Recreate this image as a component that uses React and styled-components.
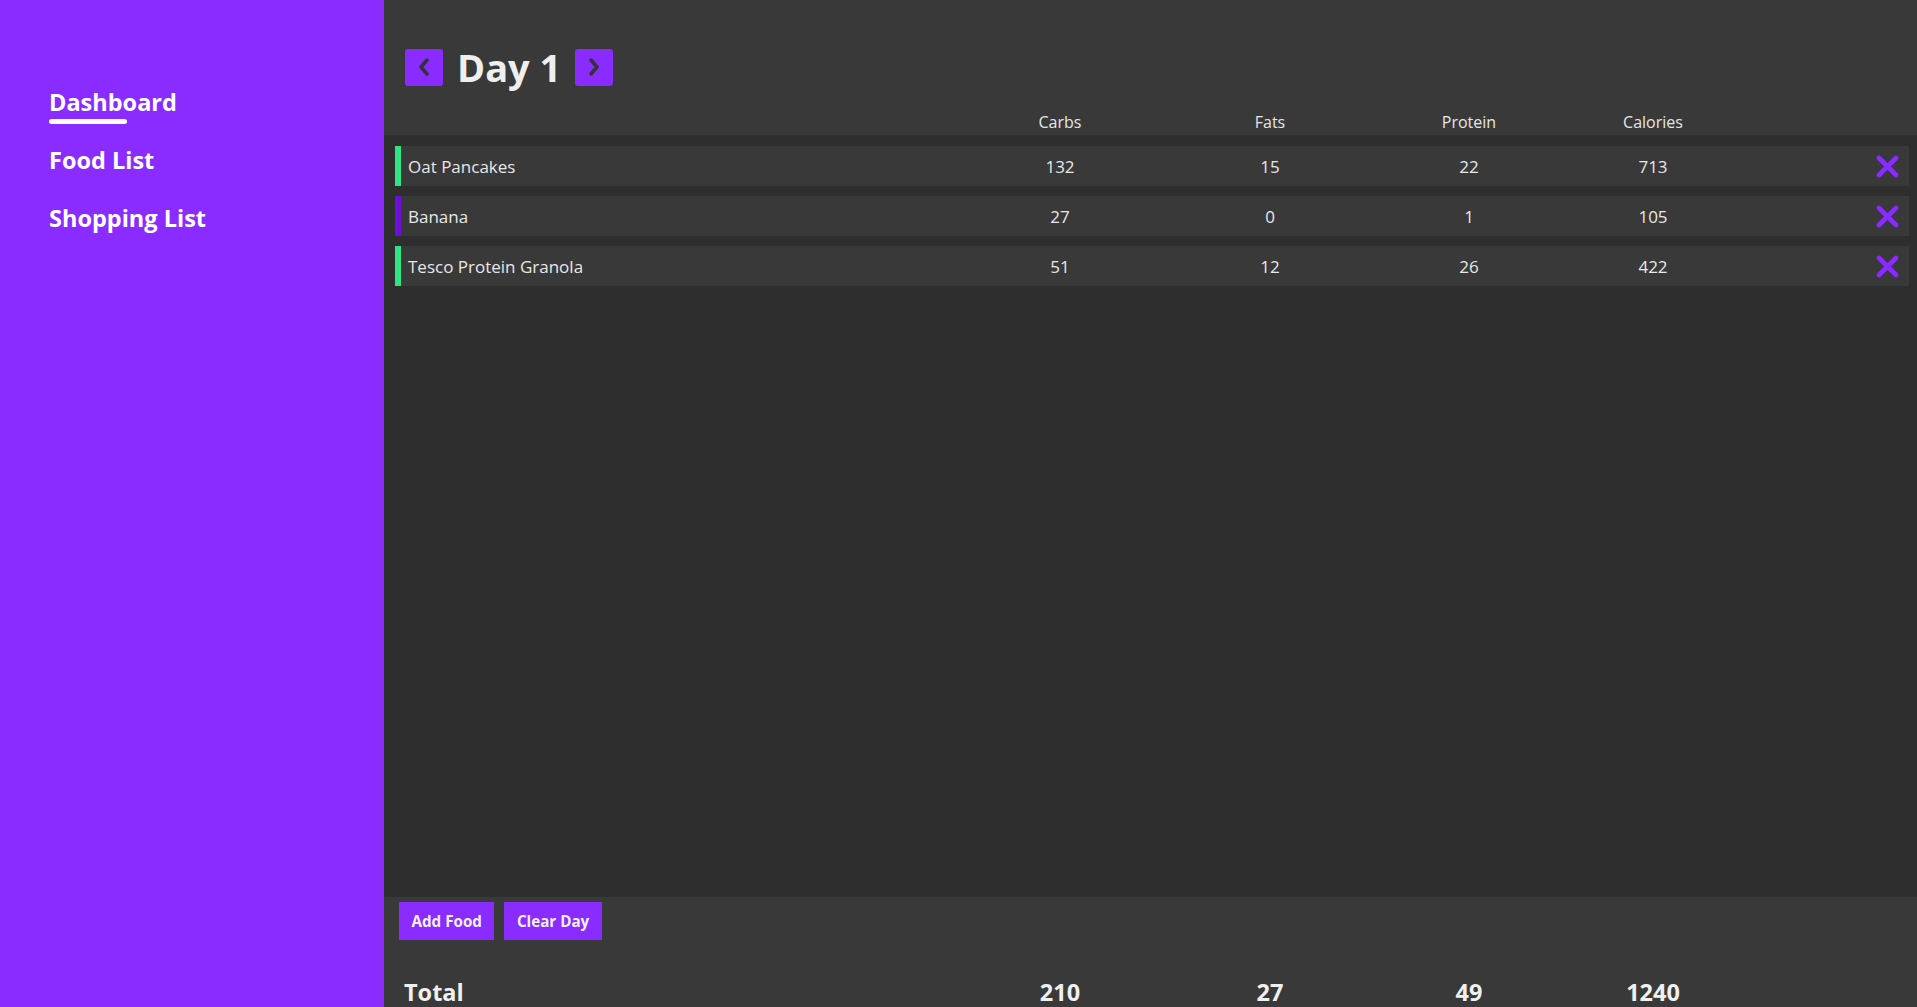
import React from "react";
import styled, { createGlobalStyle } from "styled-components";

const foods = [
  { name: "Oat Pancakes", carbs: 132, fats: 15, protein: 22, calories: 713, tag: "green" },
  { name: "Banana", carbs: 27, fats: 0, protein: 1, calories: 105, tag: "purple" },
  { name: "Tesco Protein Granola", carbs: 51, fats: 12, protein: 26, calories: 422, tag: "green" },
];

const tagColors = {
  green: "#2fe583",
  purple: "#6c0fd8",
};

const Global = createGlobalStyle`
  * { box-sizing: border-box; }
  body {
    margin: 0;
    font-family: "Open Sans", "Noto Sans", sans-serif;
    background: #2e2e2e;
    color: #ececec;
  }
`;

const Chevron = ({ dir }) => (
  <svg width="14" height="18" viewBox="0 0 14 18">
    <polyline
      points={dir === "left" ? "10,2 4,9 10,16" : "4,2 10,9 4,16"}
      fill="none"
      stroke="#333333"
      strokeWidth="3.5"
      strokeLinecap="round"
      strokeLinejoin="round"
    />
  </svg>
);

const Cross = () => (
  <svg width="23" height="23" viewBox="0 0 23 23">
    <path d="M3 3 L20 20 M20 3 L3 20" stroke="#8a2bff" strokeWidth="4.6" strokeLinecap="round" />
  </svg>
);

const App = () => {
  const total = foods.reduce(
    (acc, f) => ({
      carbs: acc.carbs + f.carbs,
      fats: acc.fats + f.fats,
      protein: acc.protein + f.protein,
      calories: acc.calories + f.calories,
    }),
    { carbs: 0, fats: 0, protein: 0, calories: 0 }
  );

  return (
    <Layout>
      <Global />
      <Sidebar>
        <NavItem $active>Dashboard</NavItem>
        <NavItem>Food List</NavItem>
        <NavItem>Shopping List</NavItem>
      </Sidebar>

      <Main>
        <Header>
          <TitleRow>
            <ArrowButton aria-label="previous day"><Chevron dir="left" /></ArrowButton>
            <Title>Day 1</Title>
            <ArrowButton aria-label="next day"><Chevron dir="right" /></ArrowButton>
          </TitleRow>
          <ColumnRow>
            <span />
            <Cell>Carbs</Cell>
            <Cell>Fats</Cell>
            <Cell>Protein</Cell>
            <Cell>Calories</Cell>
            <span />
          </ColumnRow>
        </Header>

        <Table>
          {foods.map((f) => (
            <FoodRow key={f.name} $tag={tagColors[f.tag]}>
              <Name>{f.name}</Name>
              <Cell>{f.carbs}</Cell>
              <Cell>{f.fats}</Cell>
              <Cell>{f.protein}</Cell>
              <Cell>{f.calories}</Cell>
              <RemoveButton aria-label="remove"><Cross /></RemoveButton>
            </FoodRow>
          ))}
        </Table>

        <Footer>
          <Actions>
            <ActionButton>Add Food</ActionButton>
            <ActionButton>Clear Day</ActionButton>
          </Actions>
          <TotalRow>
            <span>Total</span>
            <Cell>{total.carbs}</Cell>
            <Cell>{total.fats}</Cell>
            <Cell>{total.protein}</Cell>
            <Cell>{total.calories}</Cell>
            <span />
          </TotalRow>
        </Footer>
      </Main>
    </Layout>
  );
};

const Layout = styled.div`
  display: flex;
  height: 100vh;
  overflow: hidden;
`;

const Sidebar = styled.nav`
  width: 384px;
  flex-shrink: 0;
  background: #8a2bff;
  display: flex;
  flex-direction: column;
  gap: 24px;
  padding: 85px 0 0 49px;
`;

const NavItem = styled.a`
  position: relative;
  align-self: flex-start;
  font-size: 23.5px;
  line-height: 34px;
  font-weight: 700;
  color: #ffffff;
  cursor: pointer;

  &::after {
    content: "";
    display: ${({ $active }) => ($active ? "block" : "none")};
    position: absolute;
    left: 0;
    top: 34px;
    width: 78px;
    height: 5px;
    border-radius: 3px;
    background: #ffffff;
  }
`;

const Main = styled.main`
  flex: 1;
  display: flex;
  flex-direction: column;
  min-width: 0;
`;

const Header = styled.header`
  height: 135px;
  background: #393939;
  padding-top: 48px;
`;

const TitleRow = styled.div`
  display: flex;
  align-items: center;
  gap: 14px;
  padding-left: 21px;
  height: 38px;
`;

const ArrowButton = styled.button`
  width: 38px;
  height: 37px;
  border: none;
  border-radius: 3px;
  background: #8a2bff;
  display: flex;
  align-items: center;
  justify-content: center;
  padding: 0;
  cursor: pointer;
`;

const Title = styled.h1`
  margin: 0;
  font-size: 38px;
  line-height: 38px;
  font-weight: 700;
  color: #efefef;
`;

const gridCols = "1fr 210px 210px 188px 180px 166px";

const ColumnRow = styled.div`
  display: grid;
  grid-template-columns: ${gridCols};
  margin: 23px 8px 0 11px;
  padding-left: 13px;
  height: 26px;
  align-items: center;
  font-size: 16px;
  color: #e6e6e6;
`;

const Cell = styled.span`
  text-align: center;
`;

const Table = styled.section`
  flex: 1;
  background: #2e2e2e;
  display: flex;
  flex-direction: column;
  gap: 10px;
  padding: 11px 8px 0 11px;
`;

const FoodRow = styled.div`
  display: grid;
  grid-template-columns: ${gridCols};
  align-items: center;
  height: 40px;
  background: #393939;
  border-left: 6px solid ${({ $tag }) => $tag};
  padding-left: 7px;
  font-size: 17px;
  color: #e8e8e8;
`;

const Name = styled.span`
  white-space: nowrap;
`;

const RemoveButton = styled.button`
  justify-self: end;
  margin-right: 10px;
  background: none;
  border: none;
  padding: 0;
  display: flex;
  cursor: pointer;
`;

const Footer = styled.footer`
  height: 110px;
  background: #393939;
  padding: 5px 8px 0 15px;
`;

const Actions = styled.div`
  display: flex;
  gap: 10px;
`;

const ActionButton = styled.button`
  height: 38px;
  padding: 0 12.5px;
  border: none;
  background: #8a2bff;
  color: #f2f2f2;
  font-family: inherit;
  font-size: 15.2px;
  font-weight: 700;
  cursor: pointer;
`;

const TotalRow = styled.div`
  display: grid;
  grid-template-columns: ${gridCols};
  margin: 39px 0 0 -4px;
  padding-left: 9px;
  font-size: 23.5px;
  line-height: 26px;
  font-weight: 700;
  color: #f0f0f0;
`;

export default App;
